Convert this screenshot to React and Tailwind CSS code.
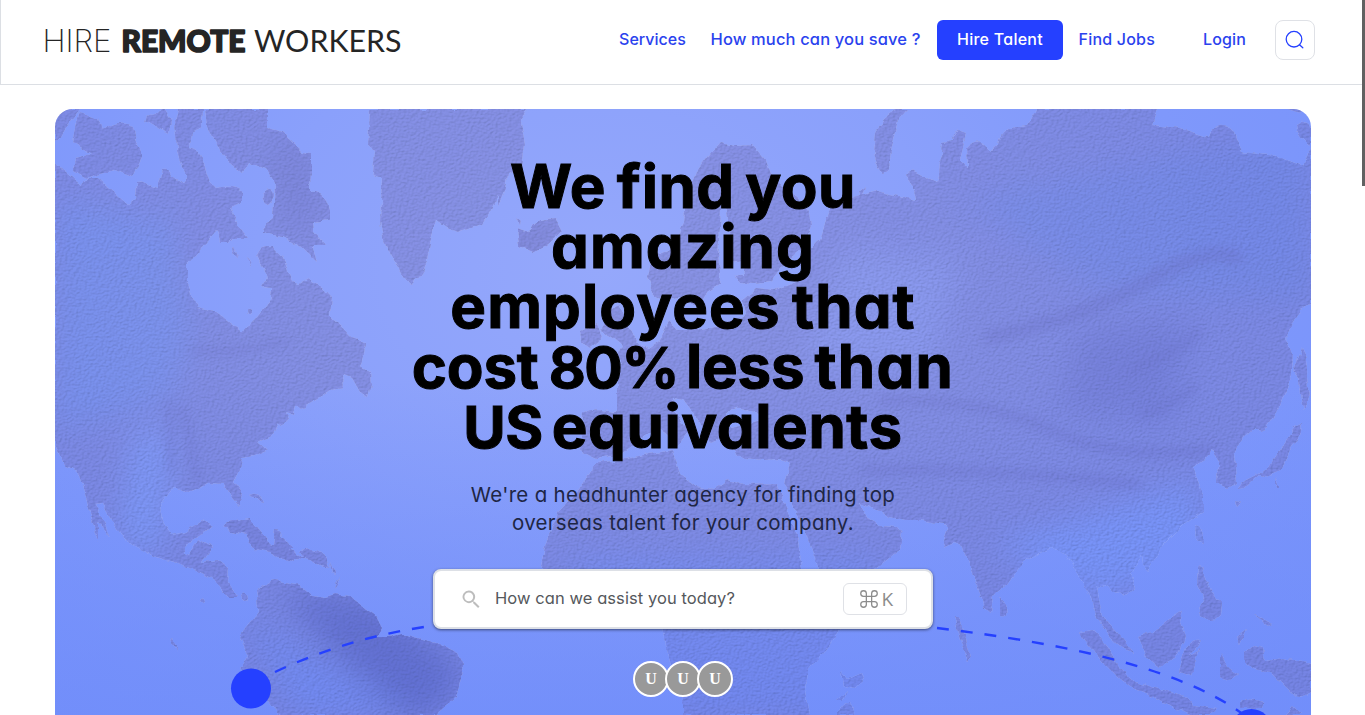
const land = [
  // North America
  "M55 163L82 185L88 178L98 178L115 193L128 205L136 199L137 182Q143 180 148 185L157 188L162 170Q168 168 174 177L183 183L187 178L181 165L177 152L175 122L178 109H203L202 127L192 132L190 148Q200 150 202 158L210 182L215 188Q236 184 243 192L243 202L230 207L238 225L248 238L232 238L228 242L220 242L218 230L202 248L187 265L187 282L197 308L215 312L242 332L257 318L270 302L272 288L262 287L268 278L257 255Q260 245 272 247L283 257L292 282L297 284L308 278L322 287L332 298L330 315L340 325L352 338L365 342L364 355L360 367L370 373L371 385L368 397L360 392L352 378L343 375L344 388L330 390L315 400L300 408L296 405L294 415L285 412L288 420L278 425L272 436L258 442L267 450L255 456L242 458L240 470L234 481L243 493L240 507L232 498L225 485L208 484L188 492L173 488L160 505L162 520L172 535L185 532L202 520L213 525L206 532L195 537L183 552L188 555L198 540L213 548L202 562L218 560L228 568L227 582L238 597L228 597L212 578L178 563L155 557L125 540L110 518L102 502L95 503L110 537L98 522L98 543L88 505L78 472L65 465L55 445Z",
  // Arctic archipelago
  "M205 109H268L268 128L282 132L302 152L311 153L311 170L310 192Q326 190 330 210L330 220L313 222L314 232L325 245L312 245L317 262L302 248L285 238L262 232Q262 222 273 220L275 182L266 168L248 162L242 173L228 162L215 142L207 128Z",
  "M78 113L98 118L102 130Q120 118 133 125L136 142L143 155L132 177L115 170L85 178L73 170L75 158L92 154L72 142Z",
  "M55 109H80L68 125L60 138L55 142Z",
  "M147 116L165 109L171 120L169 134L158 128L145 121Z",
  "M263 193q8-8 10 0q0 8-5 11q-7-2-5-11zM232 246q6 4 6 13q-6-4-6-13zM247 257q5 3 5 10zM247 310q6-4 5 4q-4 4-5-4z",
  // Greenland, Iceland
  "M370 109L368 145L374 150L372 173L382 177L380 222Q382 240 392 258Q402 275 410 283Q420 280 427 262Q430 240 436 220L447 228L457 232L482 223L490 212L498 195L498 205Q507 190 507 173L522 168L525 145L521 122L528 109Z",
  "M516 217l5 4l-1 5zM517 228L528 232L540 220L555 218L562 232L546 246L533 252L519 246Z",
  // Central and South American coast
  "M222 527Q225 520 236 521L250 519L260 530L270 543L285 548L294 551L305 558L300 551L311 549L323 552L330 568L320 566L310 560L295 558L288 562L270 552L255 549L245 534L230 531Z",
  "M275 530q8 0 6 8l12 10l-8 4l-12-8zM248 495q12-4 15 6q-8-2-15-6zM330 562l6 14l-4-2zM336 582l4-4l-6 12zM200 600q4-4 5 2q-4 3-5-2zM170 640q6-4 8 12zM241 596q6-6 7 3q-5 5-7-3z",
  "M255 592Q263 586 268 583Q273 578 280 581L300 585L312 595L325 597L335 594L350 596L365 608L376 616L382 628L378 637L388 637L400 633L425 640L440 644L458 653L464 665L456 698L442 708L438 715H280L240 668L248 656L240 638L245 628L258 612Z",
  // British isles
  "M600 330L612 310L619 304L627 322L636 341L649 350L645 362L624 365L617 355L622 345L612 337ZM580 332L597 324L603 338L590 348L581 342Z",
  // Scandinavia
  "M720 143L735 146L753 145L765 158L772 176L785 190L808 206L811 226L803 247L780 268L771 282L754 284L739 283L731 273L731 255L721 270L719 285L707 292L700 311L691 304L687 296L662 300L652 294L648 275L653 255L672 249L684 223L686 195L697 171L708 156Z",
  // Eurasia
  "M798 262L820 240L830 208L848 200L877 191L917 200L915 190L905 175Q909 168 917 172L938 183L942 142L952 140L958 130L966 133L960 160L968 168L967 148Q977 138 983 143L990 152L998 144Q1000 133 1010 128L1027 126L1037 109H1157L1152 125L1180 128L1208 138Q1212 124 1222 126Q1233 126 1236 138L1242 152L1277 156L1303 166L1307 156L1311 148V305L1300 310L1293 322L1285 340L1293 352L1292 375L1280 405L1263 432L1255 428L1243 438L1235 452L1237 483L1228 488L1217 483L1218 462L1213 450L1204 460L1193 467L1203 495L1203 512L1183 525L1163 545L1153 562L1147 572L1143 565L1142 555L1130 575L1135 588L1123 597L1105 585L1097 588L1102 615L1117 632L1131 650L1133 653L1118 645L1110 638L1097 618L1090 595L1080 578L1067 555L1050 548L1023 562L1007 585L993 595L991 613L985 608L978 588L963 548L956 543L946 548L943 543L948 528L943 524L920 520L905 520L890 517L875 509L860 503L868 518L880 526L897 527L902 533L900 550L873 570H819L807 537L795 510L785 484L790 463L779 459L763 460L746 458L737 455L727 443L720 438L710 443L697 418L684 400L672 398L676 415L690 430L677 447L668 435L657 427L640 440L620 455L597 458L580 450L583 412L600 410L617 412V363L640 355L660 340L668 320L678 330L695 330L720 325L745 315L742 300L757 288L775 290L798 280L805 268Z",
  // Africa
  "M597 463L620 460L643 455L673 450L680 474L697 487L714 489L727 480L745 485L777 484L785 505L795 530L808 560L830 590L862 590L852 618L839 631L826 651L808 668L806 690L810 715H683L683 700L672 670L667 650L662 620L640 595L560 590L541 565L545 545L557 513L575 495L587 477Z",
  "M842 671l6 8l14-6l2 6l-8 9l-12-2zM836 700l10-10l-4 10zM838 712q6-10 12-9q4 6 3 12h-15z",
  // Novaya Zemlya
  "M896 109L884 118L875 133L873 150Q876 170 883 173L889 170L891 150L896 132L899 119L908 109Z",
  "M860 192l6-5l-4 12zM1287 109h18l-5 4zM1296 124q8-6 15 4v18q-14-8-15-22z",
  // Japan, Taiwan and Philippines
  "M1295 427L1302 424L1300 436L1290 450L1281 470L1268 476L1260 474L1245 488L1237 489L1242 482L1258 474L1272 462L1280 450L1288 436ZM1302 348q6 10 5 30l2 20l-6 12q-4-20-4-30l-5-12z",
  "M1195 528q6-4 8 6l0 9l-7-3zM1198 564q8 0 7 14l7 14l10 12l-1 10l-10 8l-10-8l-2-8l5-8l-7-14zM1275 477l5 10l-3 0zM1295 502l3 14M1236 500l6 2l-4 4z",
  // Indonesia, Sri Lanka, Maldives
  "M1000 597q8 8 6 20l-6-1zM954 616q8 0 8 12l8 30l-3 3l-8-24z",
  "M1080 632L1093 630L1108 646L1120 668L1135 682L1170 692L1188 697L1192 705L1217 708L1210 715H1190L1160 700L1130 687L1116 675L1103 663L1085 640Z",
  "M1138 635L1153 632L1165 622L1183 610L1180 622L1185 636L1178 655L1160 667L1145 656Z",
  "M1190 655l10-5q0-6-3 4l-6 22l-12-4l6-24q10-10 15-8l-2 5zM1220 652l6 14l12 8l-8 6l-10-3zM1236 638l10-8l-6 14z",
  "M1245 652l8-7l10 2l2 14l18-3l28 6v28l-14 6l-14-14l-12-12l-18-3l-8-6zM1253 614l20 10l-4 2zM1240 702q10-5 24 0l-2 6h-22zM1285 715l8-8l8 8z",
];

const lakes = "M730 283q6-10 14-8l-2-14l-8 2l-4-30q-6-30-8-40l-3 50q-2 25 5 42zM740 520l-6-10M765 465l12-2M725 415q10-12 24-4l22 6l-22 6l-20 4zM779 477q5 14 8 28l22 50l8 18l-14 2l-6-40l-16-40z";

function WorldMap() {
  return (
    <svg className="absolute inset-0 size-full" viewBox="55 109 1256 606" preserveAspectRatio="none" aria-hidden="true">
      <defs>
        <radialGradient id="sea" gradientUnits="userSpaceOnUse" cx="600" cy="270" r="860" gradientTransform="translate(0 70) scale(1 .74)">
          <stop offset="0" stopColor="#95a8fb" />
          <stop offset=".4" stopColor="#8aa0fb" />
          <stop offset=".7" stopColor="#7f98fb" />
          <stop offset="1" stopColor="#7893fb" />
        </radialGradient>
        <linearGradient id="depth" x1="0" y1="0" x2="0" y2="1">
          <stop offset=".45" stopColor="#6f8cfa" stopOpacity="0" />
          <stop offset="1" stopColor="#6f8cfa" stopOpacity=".72" />
        </linearGradient>
        <filter id="paper" filterUnits="userSpaceOnUse" x="55" y="109" width="1256" height="606" colorInterpolationFilters="sRGB">
          <feTurbulence type="fractalNoise" baseFrequency=".1" numOctaves="2" seed="4" result="rough" />
          <feDisplacementMap in="SourceGraphic" in2="rough" scale="6" xChannelSelector="R" yChannelSelector="G" result="shape" />
          <feTurbulence type="fractalNoise" baseFrequency=".36 .48" numOctaves="2" seed="9" result="grain" />
          <feDiffuseLighting in="grain" surfaceScale=".8" diffuseConstant="1.1" lightingColor="#ffffff" result="lit">
            <feDistantLight azimuth="235" elevation="58" />
          </feDiffuseLighting>
          <feComposite in="lit" in2="shape" operator="in" result="litLand" />
          <feBlend in="litLand" in2="shape" mode="multiply" />
        </filter>
        <filter id="soft" x="-30%" y="-30%" width="160%" height="160%"><feGaussianBlur stdDeviation="16" /></filter>
        <filter id="crease" x="-30%" y="-30%" width="160%" height="160%"><feGaussianBlur stdDeviation="5" /></filter>
        <mask id="landMask" maskUnits="userSpaceOnUse" x="55" y="109" width="1256" height="606">
          <path d={land.join("")} fill="#fff" />
          <path d={lakes} fill="#000" />
        </mask>
      </defs>
      <rect x="55" y="109" width="1256" height="606" fill="url(#sea)" />
      <rect x="55" y="109" width="1256" height="606" fill="url(#depth)" />
      <g filter="url(#paper)" opacity=".42">
        <g mask="url(#landMask)">
          <rect x="55" y="109" width="1256" height="606" fill="#7c78c8" />
          <g filter="url(#soft)">
            <path d="M55 200L170 220L190 330L170 400L55 430Z" fill="#7085dd" />
            <path d="M135 430L170 430L160 560L120 540Z" fill="#7f9bf8" />
            <path d="M990 545L1200 480L1200 560L1100 600Z" fill="#7894f8" />
            <path d="M960 200L1311 130L1311 300L1100 290Z" fill="#6a77ce" />
            <path d="M840 250L960 260L930 370L800 370Z" fill="#8a8fe0" />
            <path d="M1080 330L1190 320L1170 420L1060 410Z" fill="#6861b4" />
            <path d="M280 590L380 600L464 670L440 715L400 715L330 650Z" fill="#4a459f" />
            <path d="M245 620L285 640L400 715L300 715Z" fill="#6f84ea" />
            <path d="M300 120L320 220L290 240L270 160ZM500 220h60v40h-60zM225 515l110 50l-20 10l-100-40z" fill="#6a61b0" />
            <path d="M560 560H880V715H680Z" fill="#6f7fe4" />
          </g>
          <g filter="url(#crease)" fill="none" stroke="#5b4d9c" strokeWidth="9" opacity=".5">
            <path d="M985 338Q1080 320 1150 280T1240 262" strokeWidth="14" />
            <path d="M1130 370Q1185 350 1200 330M1140 415Q1180 405 1195 385" />
            <path d="M880 400Q990 400 1050 430T1215 450M860 470Q1020 470 1140 485" />
            <path d="M182 405Q190 440 198 485M168 400Q172 430 170 470M190 350Q240 355 290 340" strokeWidth="6" />
          </g>
        </g>
      </g>
      <g fill="none" stroke="#2540ff" strokeWidth="2.4">
        <path d="M275 672Q345 639 424 627" strokeDasharray="12 12" />
        <path d="M937 628C1037 640 1175 663 1244 715" strokeDasharray="12 12" />
      </g>
      <circle cx="251" cy="688.500" r="20" fill="#2540ff" />
      <circle cx="1251.500" cy="729" r="20" fill="#2540ff" />
    </svg>
  );
}

function Logo() {
  return (
    <svg className="ml-[43px] mt-6 h-8 w-[360px] overflow-visible" viewBox="44 24 360 32" fill="#252525" role="img" aria-label="Hire Remote Workers">
      <text x="42.500" y="52" textLength="69" lengthAdjust="spacingAndGlyphs" className="font-['Inter'] text-[31px] font-extralight">HIRE</text>
      <text x="121.500" y="51.500" textLength="124" lengthAdjust="spacingAndGlyphs" stroke="#252525" strokeWidth="1.600" strokeLinejoin="round" className="font-['Lato'] text-[29.500px] font-black">REMOTE</text>
      <text x="254" y="52" textLength="147.500" lengthAdjust="spacingAndGlyphs" className="font-['Lato'] text-[31px] font-normal">WORKERS</text>
    </svg>
  );
}

export default function App() {
  return (
    <div className="relative h-[715px] w-full overflow-hidden bg-white font-['Inter',sans-serif] [font-feature-settings:'cv11']">
      <header className="flex h-[85px] items-start justify-between border-b border-l border-[#dcdfe4]">
        <Logo />
        <nav className="mr-[50px] mt-5 flex h-10 items-center whitespace-nowrap text-base font-medium text-[#2a42ee]">
          <a className="w-[91.500px] pb-0.5 tracking-[0.04px]">Services</a>
          <a className="w-[226.500px] pb-0.5 text-[16.500px] tracking-[0.13px]">How much can you save ?</a>
          <a className="flex h-10 w-[126px] items-center justify-center rounded-md bg-[#2540ff] pb-0.5 tracking-[0.26px] text-white">Hire Talent</a>
          <a className="ml-[15.500px] w-[124.500px] pb-0.5 tracking-[0.21px]">Find Jobs</a>
          <a className="w-[72px] pb-0.5 tracking-[0.14px]">Login</a>
          <button className="flex size-10 items-center justify-center rounded-lg border border-[#dfe1e6]">
            <svg className="size-5" viewBox="0 0 20 20" fill="none" stroke="#2540ff" strokeWidth="1.300" strokeLinecap="round">
              <circle cx="9" cy="9.200" r="7.800" />
              <path d="M14.500 14.700l3.300 3" />
            </svg>
          </button>
        </nav>
      </header>

      <main className="relative ml-[55px] mt-6 flex h-[606px] w-[1256px] flex-col items-center overflow-hidden rounded-t-[18px]">
        <WorldMap />
        <h1 className="relative mt-[47px] whitespace-nowrap text-center text-[60px] font-bold leading-[60px] text-black [-webkit-text-stroke:1px_#000] [word-spacing:-4px]">
          <span className="block tracking-[0.5px]">We find you</span>
          <span className="block tracking-[1.1px]">amazing</span>
          <span className="block tracking-[1.1px]">employees that</span>
          <span className="block">
            <span className="tracking-[-0.2px]">cost </span>
            <span className="text-[57px] leading-none tracking-[-1.4px]">80% </span>
            <span className="tracking-[-0.2px]">less </span>
            <span className="tracking-[1.3px]">than</span>
          </span>
          <span className="block">
            <span className="text-[58px] leading-none tracking-[-0.6px]">US </span>
            <span className="tracking-[0.6px]">equivalents</span>
          </span>
        </h1>
        <p className="relative mt-[25px] whitespace-nowrap text-center text-[20.500px] leading-7 tracking-[0.29px] text-[#1e2645]">
          We're a headhunter agency for finding top<br />overseas talent for your company.
        </p>
        <div className="relative mt-8 flex h-[60px] w-[500px] items-center rounded-lg border-2 border-[#dde0e6] bg-white pl-[26px] pr-6 shadow-[0_1px_3px_rgba(0,0,0,0.5)]">
          <svg className="mt-px size-[22px] fill-[#bdbdbd]" viewBox="0 0 22 22">
            <path fillRule="evenodd" d="M7.800 1.500a6.300 6.300 0 1 0 3.900 11.300l.5.500v.9l4.900 4.800 1.400-1.400-4.800-4.900h-.9l-.5-.5A6.300 6.300 0 0 0 7.800 1.500zm0 1.900a4.400 4.400 0 1 1 0 8.800 4.400 4.400 0 0 1 0-8.800z" />
          </svg>
          <span className="ml-3 flex-1 whitespace-nowrap pb-0.5 text-[16.500px] tracking-[0.07px] text-[#55585c]">How can we assist you today?</span>
          <kbd className="flex h-8 w-16 items-center justify-center gap-1 rounded-md border border-[#dfe1e6] pl-1 text-[#8c8c8c]">
            <svg className="size-[18px]" viewBox="0 0 17 17" fill="none" stroke="currentColor" strokeWidth="1.200">
              <path d="M6 3.300A2.650 2.650 0 1 0 3.300 6H13.700A2.650 2.650 0 1 0 11 3.300V13.700A2.650 2.650 0 1 0 13.700 11H3.300A2.650 2.650 0 1 0 6 13.700Z" />
            </svg>
            <span className="inline-block w-[13px] font-['Open_Sans'] text-[19px] leading-none">K</span>
          </kbd>
        </div>
        <div className="relative mt-8 flex -space-x-1">
          {[0, 1, 2].map((n) => (
            <span key={n} className="flex size-9 items-center justify-center rounded-full border-2 border-white bg-[#999] font-['Liberation_Serif'] text-base font-bold leading-none text-white">U</span>
          ))}
        </div>
      </main>
      <div className="absolute right-0 top-0 h-[186px] w-[3px] bg-[#616161]" />
    </div>
  );
}
